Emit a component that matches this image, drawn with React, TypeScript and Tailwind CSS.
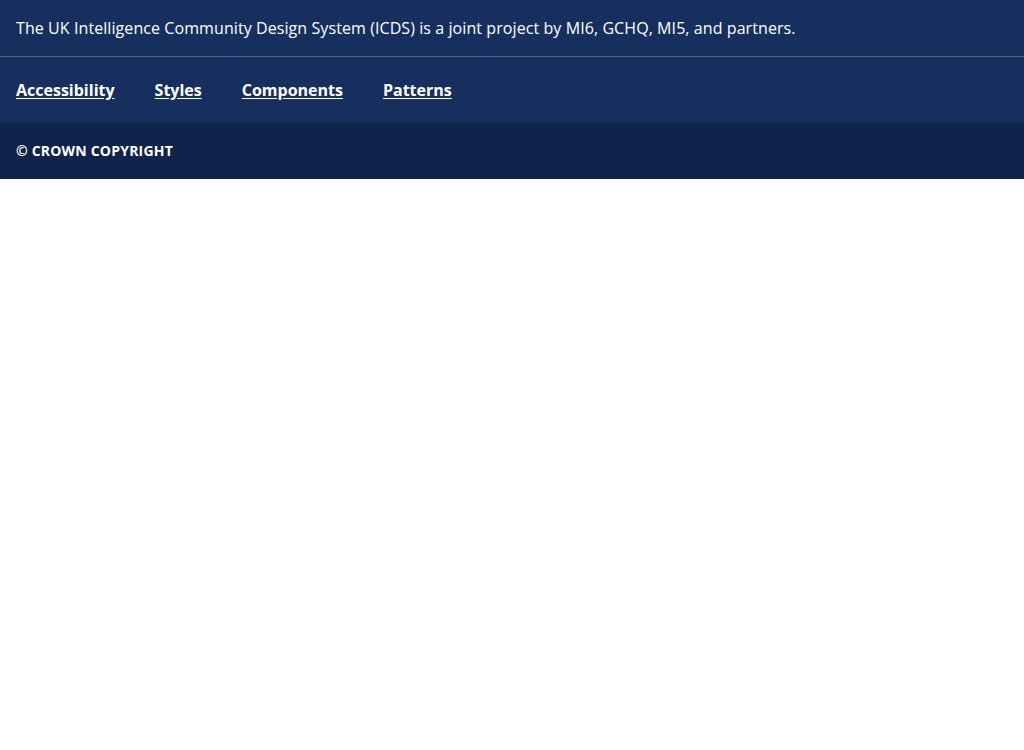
export default function App() {
  return (
    <div className="w-full bg-white" style={{ fontFamily: '"Open Sans", sans-serif' }}>
      <footer className="text-white">
        <div className="bg-[#172f5f]">
          <div className="h-[57px] flex items-center px-4 border-b border-[#4f6180]">
            <p className="text-base leading-6 tracking-[0.08px]">
              The UK Intelligence Community Design System (ICDS) is a joint project by MI6, GCHQ, MI5, and partners.
            </p>
          </div>
          <nav className="h-[66px] flex items-center gap-10 px-4">
            <a href="#" className="text-base font-bold underline underline-offset-2">Accessibility</a>
            <a href="#" className="text-base font-bold underline underline-offset-2">Styles</a>
            <a href="#" className="text-base font-bold underline underline-offset-2">Components</a>
            <a href="#" className="text-base font-bold underline underline-offset-2">Patterns</a>
          </nav>
        </div>
        <div className="bg-[#11234a] h-[56px] flex items-center px-4">
          <span className="text-sm font-bold uppercase tracking-[0.2px]">© Crown copyright</span>
        </div>
      </footer>
    </div>
  );
}
